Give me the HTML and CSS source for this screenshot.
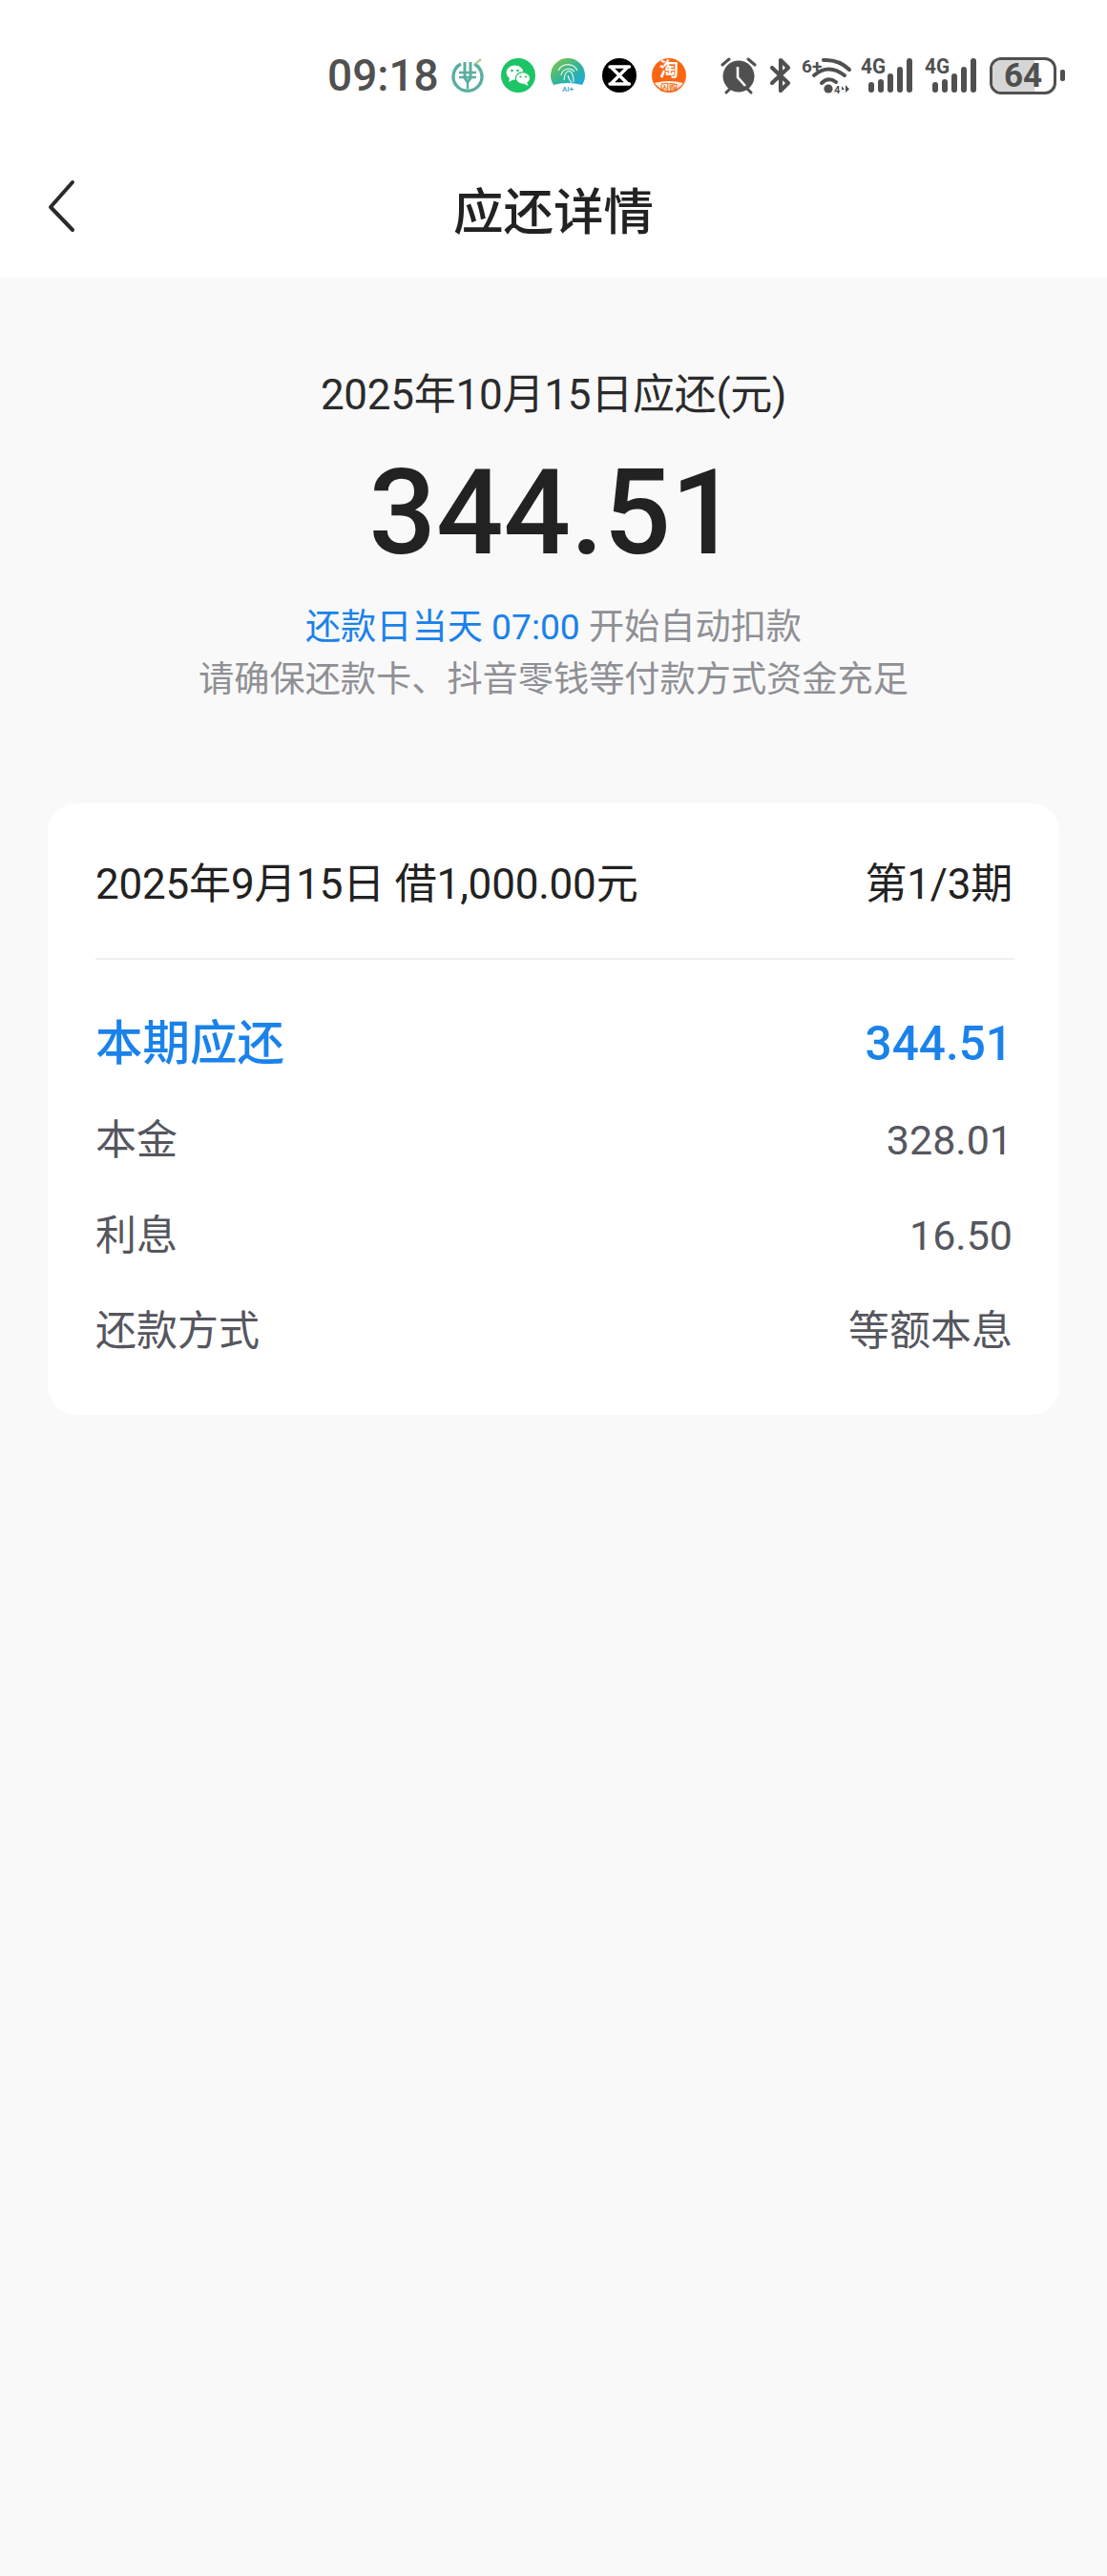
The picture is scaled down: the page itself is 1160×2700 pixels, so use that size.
FILE: index.html
```html
<!DOCTYPE html>
<html lang="zh-CN">
<head>
  <meta charset="UTF-8">
  <title>应还详情</title>
  <link rel="stylesheet" href="styles.css">
</head>
<body>
  <header class="top">
    <div class="status">
      <span class="time">09:18</span>
      <svg class="app app-bank" viewBox="0 0 36 36">
        <path d="M11 6A15 15 0 1 0 25 6" fill="none" stroke="#5aaea0" stroke-width="3.4"/>
        <path d="M15 4V21L18 25L21 21V4" fill="none" stroke="#5aaea0" stroke-width="3"/>
        <path d="M9 15H27M9 20H27M18 25V32" fill="none" stroke="#5aaea0" stroke-width="2.4"/>
        <path d="M26 6L32 1" stroke="#b5cf9a" stroke-width="2.4"/>
      </svg>
      <svg class="app app-wechat" viewBox="0 0 36 36">
        <circle cx="18" cy="18" r="18" fill="#1cc566"/>
        <ellipse cx="14.5" cy="15" rx="9" ry="7.6" fill="#fff"/>
        <path d="M9 20L8 25L14 22Z" fill="#fff"/>
        <ellipse cx="23" cy="21" rx="7.6" ry="6.4" fill="#fff" stroke="#1cc566" stroke-width="1.2"/>
        <path d="M27 25L28.5 29L23.5 26.5Z" fill="#fff"/>
        <circle cx="11.5" cy="13" r="1.3" fill="#1cc566"/>
        <circle cx="17.5" cy="13" r="1.3" fill="#1cc566"/>
        <circle cx="20.5" cy="19.5" r="1.1" fill="#1cc566"/>
        <circle cx="26" cy="19.5" r="1.1" fill="#1cc566"/>
      </svg>
      <svg class="app app-ai" viewBox="0 0 36 36">
        <defs>
          <linearGradient id="aiFill" x1="0" y1="0" x2="1" y2="1">
            <stop offset="0" stop-color="#8cc63f"/>
            <stop offset="0.55" stop-color="#2fb59a"/>
            <stop offset="1" stop-color="#1da8e6"/>
          </linearGradient>
        </defs>
        <path d="M3 28A18 18 0 1 1 33 28Q18 24 3 28Z" fill="url(#aiFill)"/>
        <g fill="none" stroke="#e6f5ea" stroke-width="1.2">
          <path d="M8 13A11 11 0 0 1 28 13"/>
          <path d="M11 18A8 8 0 0 1 25 14"/>
          <path d="M14 23Q15 12 21 14Q24 17 24 25"/>
          <path d="M18 18Q19 22 22 26"/>
        </g>
        <text class="ai-label" x="18" y="35" text-anchor="middle">AI+</text>
      </svg>
      <svg class="app app-capcut" viewBox="0 0 36 36">
        <circle cx="18" cy="18" r="18" fill="#000"/>
        <path d="M8 9H28.5M8 27H28.5M9 9L27 27M27 9L9 27" fill="none" stroke="#fff" stroke-width="3.4" stroke-linecap="round"/>
      </svg>
      <svg class="app app-taobao" viewBox="0 0 36 36">
        <circle cx="18" cy="18" r="18" fill="#fb6514"/>
        <path d="M3 26Q18 22 33 26A18 18 0 0 1 3 26Z" fill="#fff1e6"/>
        <text class="tao-label" x="18" y="19" text-anchor="middle">淘</text>
        <text class="shan-label" x="18" y="34" text-anchor="middle">闪购</text>
      </svg>
      <svg class="sys sys-alarm" viewBox="0 0 38 38">
        <circle cx="19" cy="20" r="16.5" fill="#505050"/>
        <path d="M2 8L9 2M36 8L29 2M6 37L11 32M32 37L27 32" stroke="#505050" stroke-width="3" stroke-linecap="round"/>
        <path d="M18 10V21L26 30" fill="none" stroke="#fff" stroke-width="2.6"/>
      </svg>
      <svg class="sys sys-bt" viewBox="0 0 22 38">
        <path d="M2 11L19 27L11 35V3L19 11L2 27" fill="none" stroke="#505050" stroke-width="4.2" stroke-linejoin="round" stroke-linecap="round"/>
      </svg>
      <svg class="sys sys-wifi" viewBox="0 0 52 38">
        <text class="net-label small" x="0" y="16">6+</text>
        <g fill="none" stroke="#505050" stroke-width="4" stroke-linecap="round">
          <path d="M23 3Q39 2 50 13"/>
          <path d="M13 19Q28 6 45 19"/>
          <path d="M21 27Q28 20 36 26"/>
        </g>
        <circle cx="28" cy="33" r="4.6" fill="#505050"/>
        <text class="net-tiny" x="34" y="38">4</text>
        <path d="M42 30L45 34H42ZM46 29V37L50 33.500Z" fill="#505050"/>
      </svg>
      <svg class="sys sys-signal" viewBox="0 0 55 38">
        <text class="net-label" x="0" y="17" textLength="26" lengthAdjust="spacingAndGlyphs">4G</text>
        <g fill="#505050">
          <rect x="8" y="26" width="6" height="11" rx="3"/>
          <rect x="18" y="23" width="6" height="14" rx="3"/>
          <rect x="28" y="17" width="6" height="20" rx="3"/>
          <rect x="38" y="10" width="6" height="27" rx="3"/>
          <rect x="48" y="1" width="6" height="36" rx="3"/>
        </g>
      </svg>
      <svg class="sys sys-signal second" viewBox="0 0 55 38">
        <text class="net-label" x="0" y="17" textLength="26" lengthAdjust="spacingAndGlyphs">4G</text>
        <g fill="#505050">
          <rect x="8" y="26" width="6" height="11" rx="3"/>
          <rect x="18" y="23" width="6" height="14" rx="3"/>
          <rect x="28" y="17" width="6" height="20" rx="3"/>
          <rect x="38" y="10" width="6" height="27" rx="3"/>
          <rect x="48" y="1" width="6" height="36" rx="3"/>
        </g>
      </svg>
      <div class="battery">
        <div class="battery-fill"></div>
        <span class="battery-num">64</span>
      </div>
      <div class="battery-nub"></div>
    </div>
    <div class="nav">
      <svg class="back" viewBox="0 0 32 56">
        <path d="M28 3L5 29L28 53" fill="none" stroke="#2a2a2a" stroke-width="4" stroke-linecap="round" stroke-linejoin="round"/>
      </svg>
      <h1 class="title">应还详情</h1>
    </div>
  </header>

  <section class="summary">
    <div class="due-date">2025年10月15日应还(元)</div>
    <div class="due-amount">344.51</div>
    <p class="note"><span class="blue">还款日当天 07:00</span> 开始自动扣款</p>
    <p class="note">请确保还款卡、抖音零钱等付款方式资金充足</p>
  </section>

  <section class="card">
    <div class="card-head">
      <span>2025年9月15日 借1,000.00元</span>
      <span>第1/3期</span>
    </div>
    <div class="rows">
      <div class="row row-main"><span>本期应还</span><span>344.51</span></div>
      <div class="row"><span>本金</span><span>328.01</span></div>
      <div class="row"><span>利息</span><span>16.50</span></div>
      <div class="row"><span>还款方式</span><span>等额本息</span></div>
    </div>
  </section>
</body>
</html>
```

FILE: styles.css
```css
* {
  box-sizing: border-box;
}

html, body {
  height: 100%;
}

body {
  margin: 0;
  background: #f9f9f9;
  color: #222;
  font-family: Roboto, "Noto Sans CJK SC", sans-serif;
}

.top {
  background: #fff;
  height: 291px;
}

.status {
  height: 150px;
  display: flex;
  align-items: center;
  padding: 8px 0 0 343px;
}

.time {
  flex: none;
  width: 115px;
  font-size: 46px;
  font-weight: 500;
  color: #505050;
  white-space: nowrap;
}

.app {
  flex: none;
  width: 36px;
  height: 36px;
  overflow: visible;
}

.app-bank { margin-left: 14px; }
.app-wechat { margin-left: 17px; }
.app-ai { margin-left: 16px; }
.app-capcut { margin-left: 18px; }
.app-taobao { margin-left: 16px; }

.ai-label {
  font: 500 8px Roboto, sans-serif;
  fill: #3f9fcf;
}

.tao-label {
  font: 700 20px "Noto Sans CJK SC", sans-serif;
  fill: #fff;
}

.shan-label {
  font: 700 9px "Noto Sans CJK SC", sans-serif;
  fill: #f0762a;
}

.sys {
  flex: none;
  height: 38px;
  overflow: visible;
}

.sys-alarm { width: 38px; margin-left: 36px; }
.sys-bt { width: 22px; margin-left: 14px; }
.sys-wifi { width: 52px; margin-left: 11px; }
.sys-signal { width: 55px; margin-left: 10px; }
.sys-signal.second { margin-left: 12px; }

.net-label {
  font: 700 22px Roboto, sans-serif;
  fill: #505050;
}

.net-label.small {
  font-size: 19px;
}

.net-tiny {
  font: 700 11px Roboto, sans-serif;
  fill: #505050;
}

.battery {
  flex: none;
  position: relative;
  width: 70px;
  height: 39px;
  margin-left: 13px;
  border: 3px solid #505050;
  border-radius: 12px;
  overflow: hidden;
  display: flex;
  align-items: center;
  justify-content: center;
}

.battery-fill {
  position: absolute;
  left: 0;
  top: 0;
  bottom: 0;
  width: 68%;
  background: #d6d6d6;
}

.battery-num {
  position: relative;
  font-size: 35px;
  font-weight: 700;
  line-height: 33px;
  color: #505050;
}

.battery-nub {
  flex: none;
  width: 5px;
  height: 12px;
  margin-left: 4px;
  border-radius: 2px;
  background: #505050;
}

.nav {
  position: relative;
  height: 141px;
  display: flex;
  align-items: center;
  justify-content: center;
  padding-bottom: 5px;
}

.back {
  position: absolute;
  left: 48px;
  top: 38px;
  width: 32px;
  height: 56px;
}

.title {
  margin: 0;
  font-size: 52.5px;
  font-weight: 500;
  color: #222;
}

.summary {
  padding-top: 95px;
  text-align: center;
}

.due-date {
  font-size: 44px;
  line-height: 56px;
  letter-spacing: -0.25px;
  color: #2b2b2b;
}

.due-amount {
  margin-top: 26px;
  font-size: 124px;
  font-weight: 500;
  line-height: 140px;
  color: #222;
}

.note {
  margin: 0;
  font-size: 37.2px;
  line-height: 55px;
  color: #8f9095;
}

.due-amount + .note {
  margin-top: 22px;
}

.blue {
  color: #1a82ea;
}

.card {
  margin: 102px 50px 0;
  padding: 57px 47px 59px 50px;
  background: #fff;
  border-radius: 30px;
}

.card-head {
  display: flex;
  justify-content: space-between;
  font-size: 44px;
  line-height: 56px;
  letter-spacing: -0.2px;
  color: #222;
  padding: 0 2px 49px 0;
  border-bottom: 2px solid #efefef;
}

.rows {
  display: flex;
  flex-direction: column;
  gap: 42px;
  padding: 58px 2px 0 0;
}

.row {
  display: flex;
  justify-content: space-between;
  font-size: 43px;
  line-height: 58px;
  color: #55565e;
}

.row-main {
  font-size: 49.5px;
  font-weight: 500;
  line-height: 60px;
  color: #1a82ea;
}
```
